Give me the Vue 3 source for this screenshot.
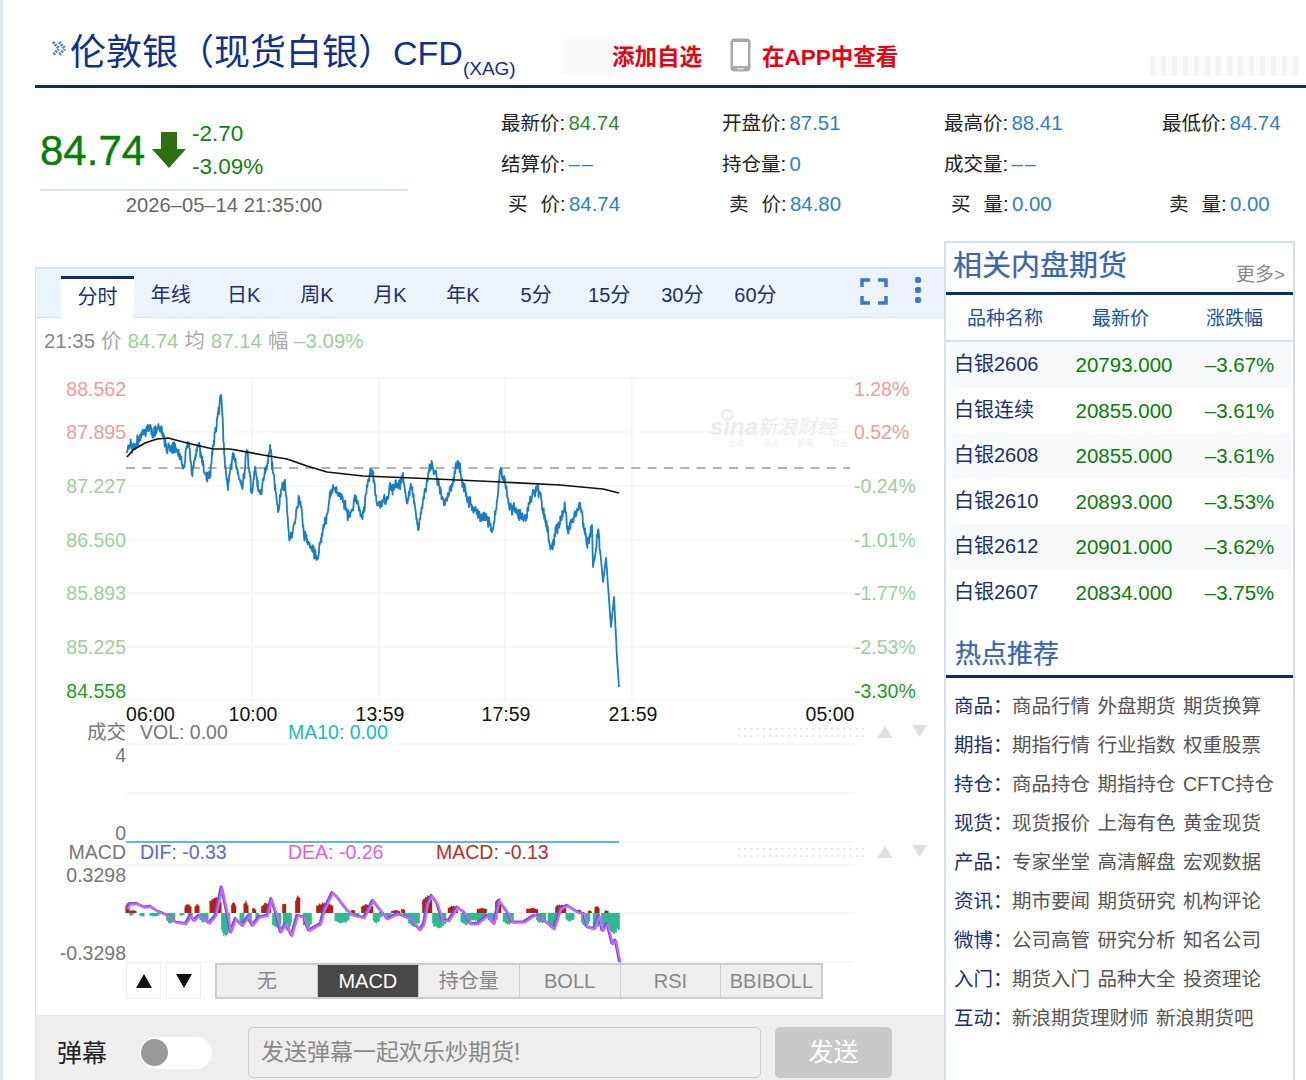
<script setup>
const stats = [
  { label: '最新价', value: '84.74', tone: 'green' },
  { label: '开盘价', value: '87.51' },
  { label: '最高价', value: '88.41' },
  { label: '最低价', value: '84.74' },
  { label: '结算价', value: '––', tone: 'none' },
  { label: '持仓量', value: '0' },
  { label: '成交量', value: '––', tone: 'none' },
  null,
  { label: '买', label2: '价', value: '84.74' },
  { label: '卖', label2: '价', value: '84.80' },
  { label: '买', label2: '量', value: '0.00' },
  { label: '卖', label2: '量', value: '0.00' },
]

const tabs = ['分时', '年线', '日K', '周K', '月K', '年K', '5分', '15分', '30分', '60分']
const indicators = ['无', 'MACD', '持仓量', 'BOLL', 'RSI', 'BBIBOLL']

const futures = [
  ['白银2606', '20793.000', '–3.67%'],
  ['白银连续', '20855.000', '–3.61%'],
  ['白银2608', '20855.000', '–3.61%'],
  ['白银2610', '20893.000', '–3.53%'],
  ['白银2612', '20901.000', '–3.62%'],
  ['白银2607', '20834.000', '–3.75%'],
]

const hot = [
  ['商品', ['商品行情', '外盘期货', '期货换算']],
  ['期指', ['期指行情', '行业指数', '权重股票']],
  ['持仓', ['商品持仓', '期指持仓', 'CFTC持仓']],
  ['现货', ['现货报价', '上海有色', '黄金现货']],
  ['产品', ['专家坐堂', '高清解盘', '宏观数据']],
  ['资讯', ['期市要闻', '期货研究', '机构评论']],
  ['微博', ['公司高管', '研究分析', '知名公司']],
  ['入门', ['期货入门', '品种大全', '投资理论']],
  ['互动', ['新浪期货理财师', '新浪期货吧']],
]

const gridY = [378, 432, 486, 540, 593, 647, 700]
const gridX = [252, 379, 505, 632]

const leftAxis = [
  ['88.562', 389, 'up'], ['87.895', 432, 'up'], ['87.227', 486, 'dn'], ['86.560', 540, 'dn'],
  ['85.893', 593, 'dn'], ['85.225', 647, 'dn'], ['84.558', 691, 'low'],
]
const rightAxis = [
  ['1.28%', 389, 'up'], ['0.52%', 432, 'up'], ['-0.24%', 486, 'dn'], ['-1.01%', 540, 'dn'],
  ['-1.77%', 593, 'dn'], ['-2.53%', 647, 'dn'], ['-3.30%', 691, 'low'],
]
const timeAxis = [
  ['06:00', 150.5], ['10:00', 253], ['13:59', 380], ['17:59', 506], ['21:59', 633], ['05:00', 830],
]

// 固定种子，保证每次画出来的锯齿一样
let seed = 20260514
function rand() {
  seed = (seed * 1664525 + 1013904223) % 4294967296
  return seed / 4294967296
}

const priceKeys = [
  [127, 453], [133, 447], [140, 437], [148, 428], [153, 435], [158, 427], [163, 433], [170, 450],
  [177, 450], [184, 467], [189, 443], [192, 473], [198, 447], [205, 473], [210, 477], [215, 433],
  [221, 395], [225, 467], [228, 490], [233, 453], [242, 487], [247, 450], [252, 493], [255, 467],
  [260, 493], [270, 445], [278, 512], [285, 480], [289, 537], [295, 523], [299, 497], [304, 537],
  [317, 557], [323, 530], [333, 485], [343, 502], [350, 517], [355, 495], [362, 517], [372, 470],
  [378, 505], [387, 500], [397, 485], [403, 473], [407, 503], [412, 487], [418, 530], [432, 463],
  [445, 505], [458, 462], [467, 500], [475, 510], [493, 528], [500, 470], [510, 507], [523, 518],
  [537, 488], [552, 547], [565, 505], [568, 533], [580, 503], [587, 545], [592, 525], [593, 567],
  [598, 530], [602, 570], [603, 582], [606, 558], [611, 627], [614, 597], [617, 658], [619, 687],
]
const avgKeys = [
  [127, 457], [133, 450], [145, 443], [157, 439], [168, 438], [187, 443], [213, 449], [230, 449],
  [263, 455], [287, 459], [307, 466], [327, 472], [363, 476], [413, 478], [480, 481], [560, 485],
  [603, 489], [619, 493],
]

function toPath(points) {
  return points.map((p, i) => `${i ? 'L' : 'M'}${p[0].toFixed(1)} ${p[1].toFixed(1)}`).join('')
}

function noisy(keys, amp, stopAt) {
  const out = []
  let drift = 0
  for (let i = 0; i < keys.length - 1; i++) {
    const [x0, y0] = keys[i]
    const [x1, y1] = keys[i + 1]
    const steps = Math.max(1, Math.round((x1 - x0) / 0.4))
    for (let s = 0; s < steps; s++) {
      const t = s / steps
      const x = x0 + (x1 - x0) * t
      const y = y0 + (y1 - y0) * t
      // 贴近关键点时收小漂移，高低点不跑位
      drift = drift * 0.86 + (rand() - 0.5) * 6
      const edge = Math.min(1, Math.min(s, steps - s) / 5)
      const n = x < stopAt && s ? (rand() - 0.5) * amp + drift * edge : 0
      out.push([x, y + n])
    }
  }
  out.push(keys[keys.length - 1])
  return out
}

const pricePath = toPath(noisy(priceKeys, 9, 600))
const avgPath = toPath(avgKeys)

// 指标区坐标来自两段截图，这里换算成页面坐标
const fromLeft = (pts) => pts.map(([p, q]) => [120 + p / 3, 860 + q / 3])
const fromRight = (pts) => pts.map(([p, q]) => [380 + p / 3, 860 + q / 3])

const macdLine = [
  ...fromLeft([
    [20, 145], [28, 130], [50, 130], [70, 140], [90, 138], [110, 152], [130, 160], [150, 170],
    [165, 185], [195, 190], [210, 165], [220, 180], [235, 165], [250, 175], [265, 188], [285, 165],
    [303, 80], [318, 150], [330, 215], [345, 175], [365, 195], [385, 165], [395, 195], [415, 170],
    [440, 165], [452, 115], [470, 170], [480, 215], [495, 190], [513, 225], [530, 165], [550, 170],
    [565, 210], [600, 190], [610, 150], [635, 97], [650, 110], [680, 150], [700, 165], [730, 172],
    [757, 120], [780, 150],
  ]),
  ...fromRight([
    [20, 175], [50, 160], [90, 175], [118, 208], [130, 190], [140, 130], [153, 105], [170, 130],
    [185, 180], [205, 180], [230, 140], [250, 155], [270, 190], [290, 190], [320, 165], [340, 190],
    [355, 120], [380, 155], [395, 185], [430, 185], [460, 165], [480, 170], [520, 205], [540, 145],
    [560, 135], [590, 155], [610, 160], [620, 200], [640, 205], [655, 165], [665, 210], [680, 190],
    [695, 250], [705, 240], [718, 305],
  ]),
]
const difPath = toPath(macdLine)
const deaPath = toPath(macdLine.map(([x, y]) => [x + 1.2, y + 1]))

const redLeft = [
  [18, 30, 30], [30, 50, 8], [195, 215, 25], [225, 240, 25], [270, 305, 45], [335, 350, 30],
  [372, 385, 35], [398, 408, 15], [425, 455, 30], [488, 500, 30], [527, 542, 50], [590, 640, 30],
  [695, 705, 10], [725, 760, 25],
]
const greenLeft = [
  [30, 40, 8], [60, 75, 10], [90, 120, 10], [140, 165, 30], [180, 195, 8], [205, 220, 15],
  [240, 265, 28], [305, 330, 70], [360, 375, 35], [385, 395, 30], [408, 420, 20], [458, 485, 45],
  [490, 515, 50], [550, 575, 45], [645, 690, 30], [690, 720, 10], [760, 780, 30],
]
const redRight = [
  [0, 10, 4], [35, 60, 8], [65, 75, 12], [128, 158, 50], [205, 235, 20], [292, 322, 15],
  [347, 365, 45], [440, 475, 15], [527, 560, 25], [590, 605, 10], [625, 635, 8], [645, 660, 20],
  [675, 685, 8],
]
const greenRight = [
  [0, 8, 15], [15, 35, 15], [50, 60, 10], [70, 85, 10], [85, 120, 40], [158, 198, 45],
  [243, 275, 35], [275, 320, 25], [325, 355, 25], [370, 400, 35], [470, 500, 30], [505, 530, 45],
  [558, 583, 25], [605, 630, 40], [640, 660, 45], [665, 685, 40], [685, 720, 60],
]

function barsPath(groups, dir) {
  let d = ''
  for (const [origin, list] of groups) {
    for (const [a, b, h] of list) {
      const x0 = origin + a / 3
      const x1 = origin + b / 3
      for (let x = x0; x < x1; x += 1) {
        const k = 0.72 + 0.28 * Math.sin((Math.PI * (x - x0 + 0.5)) / (x1 - x0)) + (rand() - 0.5) * 0.18
        d += `M${x.toFixed(1)} 913v${(dir * (h / 3) * k).toFixed(1)}`
      }
    }
  }
  return d
}

const redBars = barsPath([[120, redLeft], [380, redRight]], -1)
const greenBars = barsPath([[120, greenLeft], [380, greenRight]], 1)

const handleDots = []
for (let i = 0; i < 21; i++) {
  handleDots.push([739 + i * 6.2, 0], [739 + i * 6.2, 7])
}
</script>

<template>
  <div class="page">
    <header class="head">
      <svg class="head__mark" width="17" height="17" viewBox="0 0 17 17">
        <path d="M2 2l6 6.5L2 15M8 2l6 6.5L8 15" />
      </svg>
      <h1 class="head__title">伦敦银（现货白银）<span class="head__code">CFD</span><sub>(XAG)</sub></h1>
      <div class="head__ghost"></div>
      <span class="head__link">添加自选</span>
      <svg class="head__phone" width="21" height="34" viewBox="0 0 21 34">
        <rect x="0.5" y="0.5" width="20" height="33" rx="4" fill="#a9a9a9" />
        <rect x="3" y="4" width="15" height="24" fill="#fff" />
        <rect x="7" y="30" width="7" height="1.5" fill="#ddd" />
      </svg>
      <span class="head__link">在APP中查看</span>
      <div class="head__blur"></div>
    </header>

    <section class="quote">
      <div class="quote__main">
        <div class="quote__now">
          <span class="quote__price">84.74</span>
          <svg class="quote__arrow" width="34" height="36" viewBox="0 0 34 36">
            <path d="M9 0h16v17h9L17 36 0 17h9z" fill="#2e6f11" />
          </svg>
          <div class="quote__change">
            <span>-2.70</span>
            <span>-3.09%</span>
          </div>
        </div>
        <div class="quote__time">2026–05–14 21:35:00</div>
      </div>
      <div class="stats">
        <div v-for="(s, i) in stats" :key="i" class="stats__cell">
          <template v-if="s">
            <span v-if="s.label2" class="stats__label stats__label--gap"><span>{{ s.label }}</span><span>{{ s.label2 }}</span></span>
            <span v-else class="stats__label">{{ s.label }}</span>
            <span class="stats__colon">:</span>
            <span
              class="stats__value"
              :class="{ 'stats__value--green': s.tone === 'green', 'stats__value--none': s.tone === 'none' }"
            >{{ s.value }}</span>
          </template>
        </div>
      </div>
    </section>

    <div class="body">
      <main class="chart">
        <nav class="tabs">
          <span
            v-for="(t, i) in tabs"
            :key="t"
            class="tabs__item"
            :class="{ 'tabs__item--on': i === 0 }"
          >{{ t }}</span>
          <svg class="tabs__full" width="28" height="27" viewBox="0 0 28 27">
            <path d="M2 9V2h8M18 2h8v7M26 18v7h-8M10 25H2v-7" />
          </svg>
          <span class="tabs__more"><i></i><i></i><i></i></span>
        </nav>

        <div class="readout">
          <span class="readout__time">21:35</span>
          <span class="readout__key">价</span>
          <span class="readout__val">84.74</span>
          <span class="readout__key">均</span>
          <span class="readout__val">87.14</span>
          <span class="readout__key">幅</span>
          <span class="readout__val">–3.09%</span>
        </div>

        <svg class="plot" width="908" height="607" viewBox="36 356 908 607">
          <g class="plot__grid">
            <line v-for="y in gridY" :key="y" x1="126" x2="854" :y1="y" :y2="y" />
            <line v-for="x in gridX" :key="x" :x1="x" :x2="x" y1="378" y2="700" />
            <line x1="126" x2="854" y1="744" y2="744" />
            <line x1="126" x2="854" y1="793" y2="793" />
            <line x1="126" x2="854" y1="842" y2="842" />
            <line x1="126" x2="854" y1="865" y2="865" />
            <line x1="126" x2="854" y1="913" y2="913" />
            <line x1="126" x2="854" y1="962" y2="962" />
          </g>

          <g class="plot__mark">
            <text class="plot__sina" x="710" y="435">sina</text>
            <text class="plot__sina-cn" x="757" y="434">新浪财经</text>
            <circle cx="727" cy="415" r="5" fill="none" stroke="#ececec" stroke-width="2.5" />
            <text class="plot__sina-sub" x="728" y="446">全球　·　资讯　·　新闻　·　财经</text>
          </g>

          <line class="plot__prev" x1="126" x2="850" y1="468" y2="468" />
          <path class="plot__price" :d="pricePath" />
          <path class="plot__avg" :d="avgPath" />

          <g class="plot__axis">
            <text
              v-for="a in leftAxis"
              :key="a[0]"
              x="126"
              :y="a[1]"
              text-anchor="end"
              :class="`is-${a[2]}`"
            >{{ a[0] }}</text>
            <text
              v-for="a in rightAxis"
              :key="a[0]"
              x="854"
              :y="a[1]"
              :class="`is-${a[2]}`"
            >{{ a[0] }}</text>
            <text
              v-for="a in timeAxis"
              :key="a[0]"
              :x="a[1]"
              y="714"
              text-anchor="middle"
              class="is-time"
            >{{ a[0] }}</text>
          </g>

          <g class="plot__axis">
            <text class="is-muted" x="126" y="732" text-anchor="end">成交</text>
            <text class="is-muted" x="140" y="732">VOL: 0.00</text>
            <text class="is-cyan" x="288" y="732">MA10: 0.00</text>
            <text class="is-muted" x="126" y="755" text-anchor="end">4</text>
            <text class="is-muted" x="126" y="833" text-anchor="end">0</text>
            <text class="is-muted" x="126" y="852" text-anchor="end">MACD</text>
            <text class="is-dif" x="140" y="852">DIF: -0.33</text>
            <text class="is-dea" x="288" y="852">DEA: -0.26</text>
            <text class="is-macd" x="436" y="852">MACD: -0.13</text>
            <text class="is-muted" x="126" y="875" text-anchor="end">0.3298</text>
            <text class="is-muted" x="126" y="953" text-anchor="end">-0.3298</text>
          </g>

          <line x1="126" x2="619" y1="842" y2="842" stroke="#2aa9c4" stroke-width="1.6" />

          <g v-for="top in [729, 849]" :key="top" fill="#e0e0e0">
            <circle v-for="(d, i) in handleDots" :key="i" :cx="d[0]" :cy="top + d[1]" r="1.1" />
            <path :d="`M885 ${top - 3}l7.5 12h-15z`" />
            <path :d="`M912 ${top - 4}h15l-7.5 12z`" />
          </g>

          <path class="plot__bars" stroke="#b5200e" :d="redBars" />
          <path class="plot__bars" stroke="#2dba8e" :d="greenBars" />
          <path class="plot__line plot__line--dif" stroke="#5a5ae8" :d="difPath" />
          <path class="plot__line" stroke="#d264f5" :d="deaPath" />
        </svg>

        <div class="switch">
          <span class="switch__arrow">
            <svg width="16" height="14" viewBox="0 0 16 14"><path d="M8 0l8 14H0z" /></svg>
          </span>
          <span class="switch__arrow">
            <svg width="16" height="14" viewBox="0 0 16 14"><path d="M0 0h16L8 14z" /></svg>
          </span>
          <div class="switch__tabs">
            <span
              v-for="n in indicators"
              :key="n"
              class="switch__tab"
              :class="{ 'switch__tab--on': n === 'MACD' }"
            >{{ n }}</span>
          </div>
        </div>

        <div class="danmu">
          <span class="danmu__label">弹幕</span>
          <span class="danmu__toggle"><i></i></span>
          <div class="danmu__input">发送弹幕一起欢乐炒期货!</div>
          <div class="danmu__send">发送</div>
        </div>
      </main>

      <aside class="side">
        <div class="side__head">
          <h2 class="side__title">相关内盘期货</h2>
          <span class="side__more">更多&gt;</span>
        </div>
        <div class="table__head">
          <span>品种名称</span>
          <span>最新价</span>
          <span>涨跌幅</span>
        </div>
        <div v-for="row in futures" :key="row[0]" class="table__row">
          <span class="table__name">{{ row[0] }}</span>
          <span class="table__num">{{ row[1] }}</span>
          <span class="table__num">{{ row[2] }}</span>
        </div>

        <div class="side__head side__head--hot">
          <h2 class="side__title side__title--hot">热点推荐</h2>
        </div>
        <div class="hot">
          <div v-for="row in hot" :key="row[0]" class="hot__row">
            <span class="hot__key">{{ row[0] }}：</span>
            <span v-for="link in row[1]" :key="link" class="hot__link">{{ link }}</span>
          </div>
        </div>
      </aside>
    </div>
  </div>
</template>

<style>
html,
body {
  margin: 0;
  background: #fff;
  overflow: hidden;
}
</style>

<style scoped>
.page {
  position: relative;
  box-sizing: border-box;
  width: 1306px;
  height: 1080px;
  overflow: hidden;
  padding-left: 32px;
  border-left: 3px solid #dfeaf1;
  background: #fff;
  color: #222;
  font-family: "Liberation Sans", "Noto Sans CJK SC", sans-serif;
}

.head {
  display: flex;
  align-items: center;
  box-sizing: border-box;
  height: 88px;
  padding: 24px 0 0 16px;
  border-bottom: 3px solid #0f2a6e;
}

.head__mark {
  align-self: flex-start;
  margin-top: 16px;
  flex: none;
}

.head__mark path {
  fill: none;
  stroke: #5474c4;
  stroke-width: 3;
  stroke-dasharray: 2 1;
}

.head__title {
  align-self: flex-start;
  width: 493px;
  margin: 7px 0 0 2px;
  color: #10308c;
  font-size: 36px;
  font-weight: 400;
  line-height: 44px;
  white-space: nowrap;
}

.head__code {
  font-size: 34px;
  margin-left: -1px;
}

.head__title sub {
  font-size: 19px;
  line-height: 0;
  vertical-align: -10px;
}

.head__ghost {
  width: 49px;
  height: 36px;
  margin-top: 4px;
  background: #fafafa;
  flex: none;
}

.head__link {
  color: #e60012;
  font-size: 22.5px;
  font-weight: 700;
  white-space: nowrap;
}

.head__phone {
  margin: 0 11px 0 28px;
  flex: none;
}

.head__blur {
  width: 150px;
  height: 20px;
  margin: 22px 0 0 252px;
  flex: none;
  background: repeating-linear-gradient(90deg, #f4f4f4 0 5px, #fcfcfc 5px 11px);
}

.quote {
  display: flex;
  height: 153px;
}

.quote__main {
  width: 368px;
  margin: 31px 0 0 5px;
  flex: none;
}

.quote__now {
  display: flex;
  align-items: center;
  height: 63px;
  padding-bottom: 7px;
  border-bottom: 2px solid #dde4e8;
}

.quote__price {
  color: #0a7d0a;
  font-size: 42px;
  line-height: 62px;
  width: 112px;
  -webkit-text-stroke: 0.4px #0a7d0a;
}

.quote__arrow {
  flex: none;
  margin-right: 6px;
  margin-top: -2px;
}

.quote__change {
  display: flex;
  flex-direction: column;
  color: #0f7f0f;
  font-size: 22.5px;
  line-height: 33px;
  margin-top: -2px;
}

.quote__time {
  color: #666;
  font-size: 20.2px;
  line-height: 28px;
  text-align: center;
}

.stats {
  display: grid;
  grid-template-columns: 221px 222px 218px 132px;
  grid-auto-rows: 40.5px;
  margin: 15px 0 0 93px;
  font-size: 20.4px;
  line-height: 40px;
}

.stats__cell {
  display: flex;
  white-space: nowrap;
}

.stats__label {
  color: #222;
  font-size: 19.5px;
}

.stats__label--gap {
  display: flex;
  justify-content: space-between;
  width: 52px;
  margin-left: 7px;
}

.stats__colon {
  width: 9px;
  color: #222;
}

.stats__value {
  color: #2f7fc4;
}

.stats__value--green {
  color: #2b8a2b;
}

.stats__value--none {
  letter-spacing: 2px;
  font-size: 20px;
}

.body {
  display: flex;
  height: 839px;
}

.chart {
  width: 909px;
  margin-top: 26px;
  flex: none;
  box-sizing: border-box;
  border-left: 1px solid #d5e3f3;
}

.tabs {
  position: relative;
  display: flex;
  box-sizing: border-box;
  height: 51px;
  padding: 7px 0 0 25px;
  border-top: 2px solid #d9e5ee;
  border-bottom: 1px solid #d6e3f2;
  background: #ebf3fd;
}

.tabs__item {
  width: 73.1px;
  color: #1a2f72;
  font-size: 20px;
  line-height: 38px;
  text-align: center;
}

.tabs__item--on {
  box-sizing: border-box;
  height: 43px;
  border-top: 3px solid #0f2a6e;
  background: #fff;
  line-height: 37px;
}

.tabs__full {
  position: absolute;
  top: 9px;
  left: 824px;
}

.tabs__full path {
  fill: none;
  stroke: #3f78c8;
  stroke-width: 3.5;
}

.tabs__more {
  position: absolute;
  top: 8px;
  left: 879px;
  display: flex;
  flex-direction: column;
  gap: 4px;
}

.tabs__more i {
  width: 6px;
  height: 6px;
  border-radius: 2px;
  background: #3f78c8;
}

.readout {
  display: flex;
  gap: 6px;
  box-sizing: border-box;
  height: 38px;
  padding-left: 8px;
  font-size: 20.4px;
  line-height: 46px;
}

.readout__time {
  color: #888;
}

.readout__key {
  color: #aaa;
}

.readout__val {
  color: #9bd09b;
}

.plot {
  display: block;
}

.plot__grid line {
  stroke: #f1f1f1;
  stroke-width: 1.2;
}

.plot__prev {
  stroke: #999;
  stroke-width: 1.5;
  stroke-dasharray: 9 7.3;
}

.plot__price {
  fill: none;
  stroke: #1a7cc4;
  stroke-width: 1.8;
  stroke-linejoin: round;
}

.plot__avg {
  fill: none;
  stroke: #111;
  stroke-width: 1.7;
  stroke-linejoin: round;
}

.plot__axis text {
  font-size: 19.5px;
  dominant-baseline: central;
}

.plot__mark {
  font-style: italic;
}

.plot__sina {
  fill: #ececec;
  font-size: 24px;
  font-weight: 700;
}

.plot__sina-cn {
  fill: #ececec;
  font-size: 20px;
}

.plot__sina-sub {
  fill: #eeeeee;
  font-size: 8px;
  font-style: normal;
}

.is-up {
  fill: #f29b9b;
}

.is-dn {
  fill: #9bd09b;
}

.is-low {
  fill: #1aa01a;
}

.is-time {
  fill: #111;
}

.is-muted {
  fill: #777;
}

.is-cyan {
  fill: #1ab8c4;
}

.is-dif {
  fill: #5a64e0;
}

.is-dea {
  fill: #e060e0;
}

.is-macd {
  fill: #b03030;
}

.plot__bars {
  fill: none;
  stroke-width: 1.05;
}

.plot__line {
  fill: none;
  stroke-width: 2.2;
  stroke-linejoin: round;
}

.plot__line--dif {
  stroke-width: 2.6;
}

.switch {
  display: flex;
  height: 52px;
  padding-left: 90px;
  gap: 5px;
}

.switch__arrow {
  display: flex;
  align-items: center;
  justify-content: center;
  box-sizing: border-box;
  width: 35px;
  height: 36px;
  border: 1px solid #f0f0f0;
}

.switch__arrow svg {
  fill: #111;
}

.switch__tabs {
  display: flex;
  box-sizing: border-box;
  height: 36px;
  margin-left: 9px;
  border: 2px solid #ccc;
  border-width: 2px 1px 2px 2px;
}

.switch__tab {
  box-sizing: border-box;
  width: 100.9px;
  border-right: 1px solid #ccc;
  background: #eee;
  color: #888;
  font-size: 20px;
  line-height: 32px;
  text-align: center;
}

.switch__tab--on {
  background: #484848;
  color: #fff;
}

.danmu {
  display: flex;
  align-items: center;
  box-sizing: border-box;
  height: 65px;
  padding: 12px 0 2px 21px;
  background: #eee;
}

.danmu__label {
  width: 83px;
  margin-top: -3px;
  color: #222;
  font-size: 25px;
}

.danmu__toggle {
  display: flex;
  align-items: center;
  box-sizing: border-box;
  width: 72px;
  height: 32px;
  margin-right: 36px;
  padding-left: 1px;
  border-radius: 16px;
  background: #fff;
}

.danmu__toggle i {
  width: 27px;
  height: 27px;
  border-radius: 50%;
  background: #999;
}

.danmu__input {
  box-sizing: border-box;
  width: 513px;
  height: 51px;
  padding-left: 12px;
  border: 1px solid #ccc;
  border-radius: 5px;
  color: #888;
  font-size: 23px;
  line-height: 48px;
}

.danmu__send {
  width: 117px;
  height: 51px;
  margin-left: 14px;
  border-radius: 5px;
  background: #c9c9c9;
  color: #fff;
  font-size: 25px;
  line-height: 51px;
  text-align: center;
}

.side {
  box-sizing: border-box;
  width: 351px;
  flex: none;
  border: 2px solid #d2e2ef;
  border-bottom: 0;
}

.side__head {
  display: flex;
  align-items: flex-end;
  justify-content: space-between;
  box-sizing: border-box;
  height: 52px;
  padding: 0 8px 0 7px;
  border-bottom: 3px solid #0f2a6e;
}

.side__head--hot {
  height: 62px;
  padding-left: 9px;
}

.side__title {
  margin: 0 0 3px;
  color: #3f66ad;
  font-size: 29px;
  font-weight: 400;
  line-height: 46px;
  text-shadow: 0 0 1px #8aa4d4;
}

.side__title--hot {
  margin: 0;
  font-size: 26px;
  line-height: 42px;
}

.side__more {
  color: #888;
  font-size: 19px;
  line-height: 34px;
}

.table__head {
  display: grid;
  grid-template-columns: 125px 114px 1fr;
  box-sizing: border-box;
  height: 47px;
  padding-left: 21px;
  border-bottom: 2px solid #cfe0ee;
  color: #1d4f9e;
  font-size: 19px;
  line-height: 47px;
}

.table__row {
  display: grid;
  grid-template-columns: 106px 128px 1fr;
  height: 45.6px;
  margin: 0 2px 0 4px;
  padding-left: 4px;
  font-size: 20.5px;
  line-height: 45px;
}

.table__row:nth-of-type(odd) {
  background: #f7f9fa;
}

.table__name {
  color: #1a2f6f;
  font-size: 20px;
  white-space: nowrap;
}

.table__num {
  color: #0a7d0a;
  text-align: center;
}

.hot {
  padding: 9px 0 0 8px;
}

.hot__row {
  display: flex;
  gap: 7.5px;
  height: 39px;
  color: #555;
  font-size: 19.5px;
  line-height: 39px;
  white-space: nowrap;
}

.hot__key {
  width: 50.5px;
  color: #1a2f6f;
}
</style>
